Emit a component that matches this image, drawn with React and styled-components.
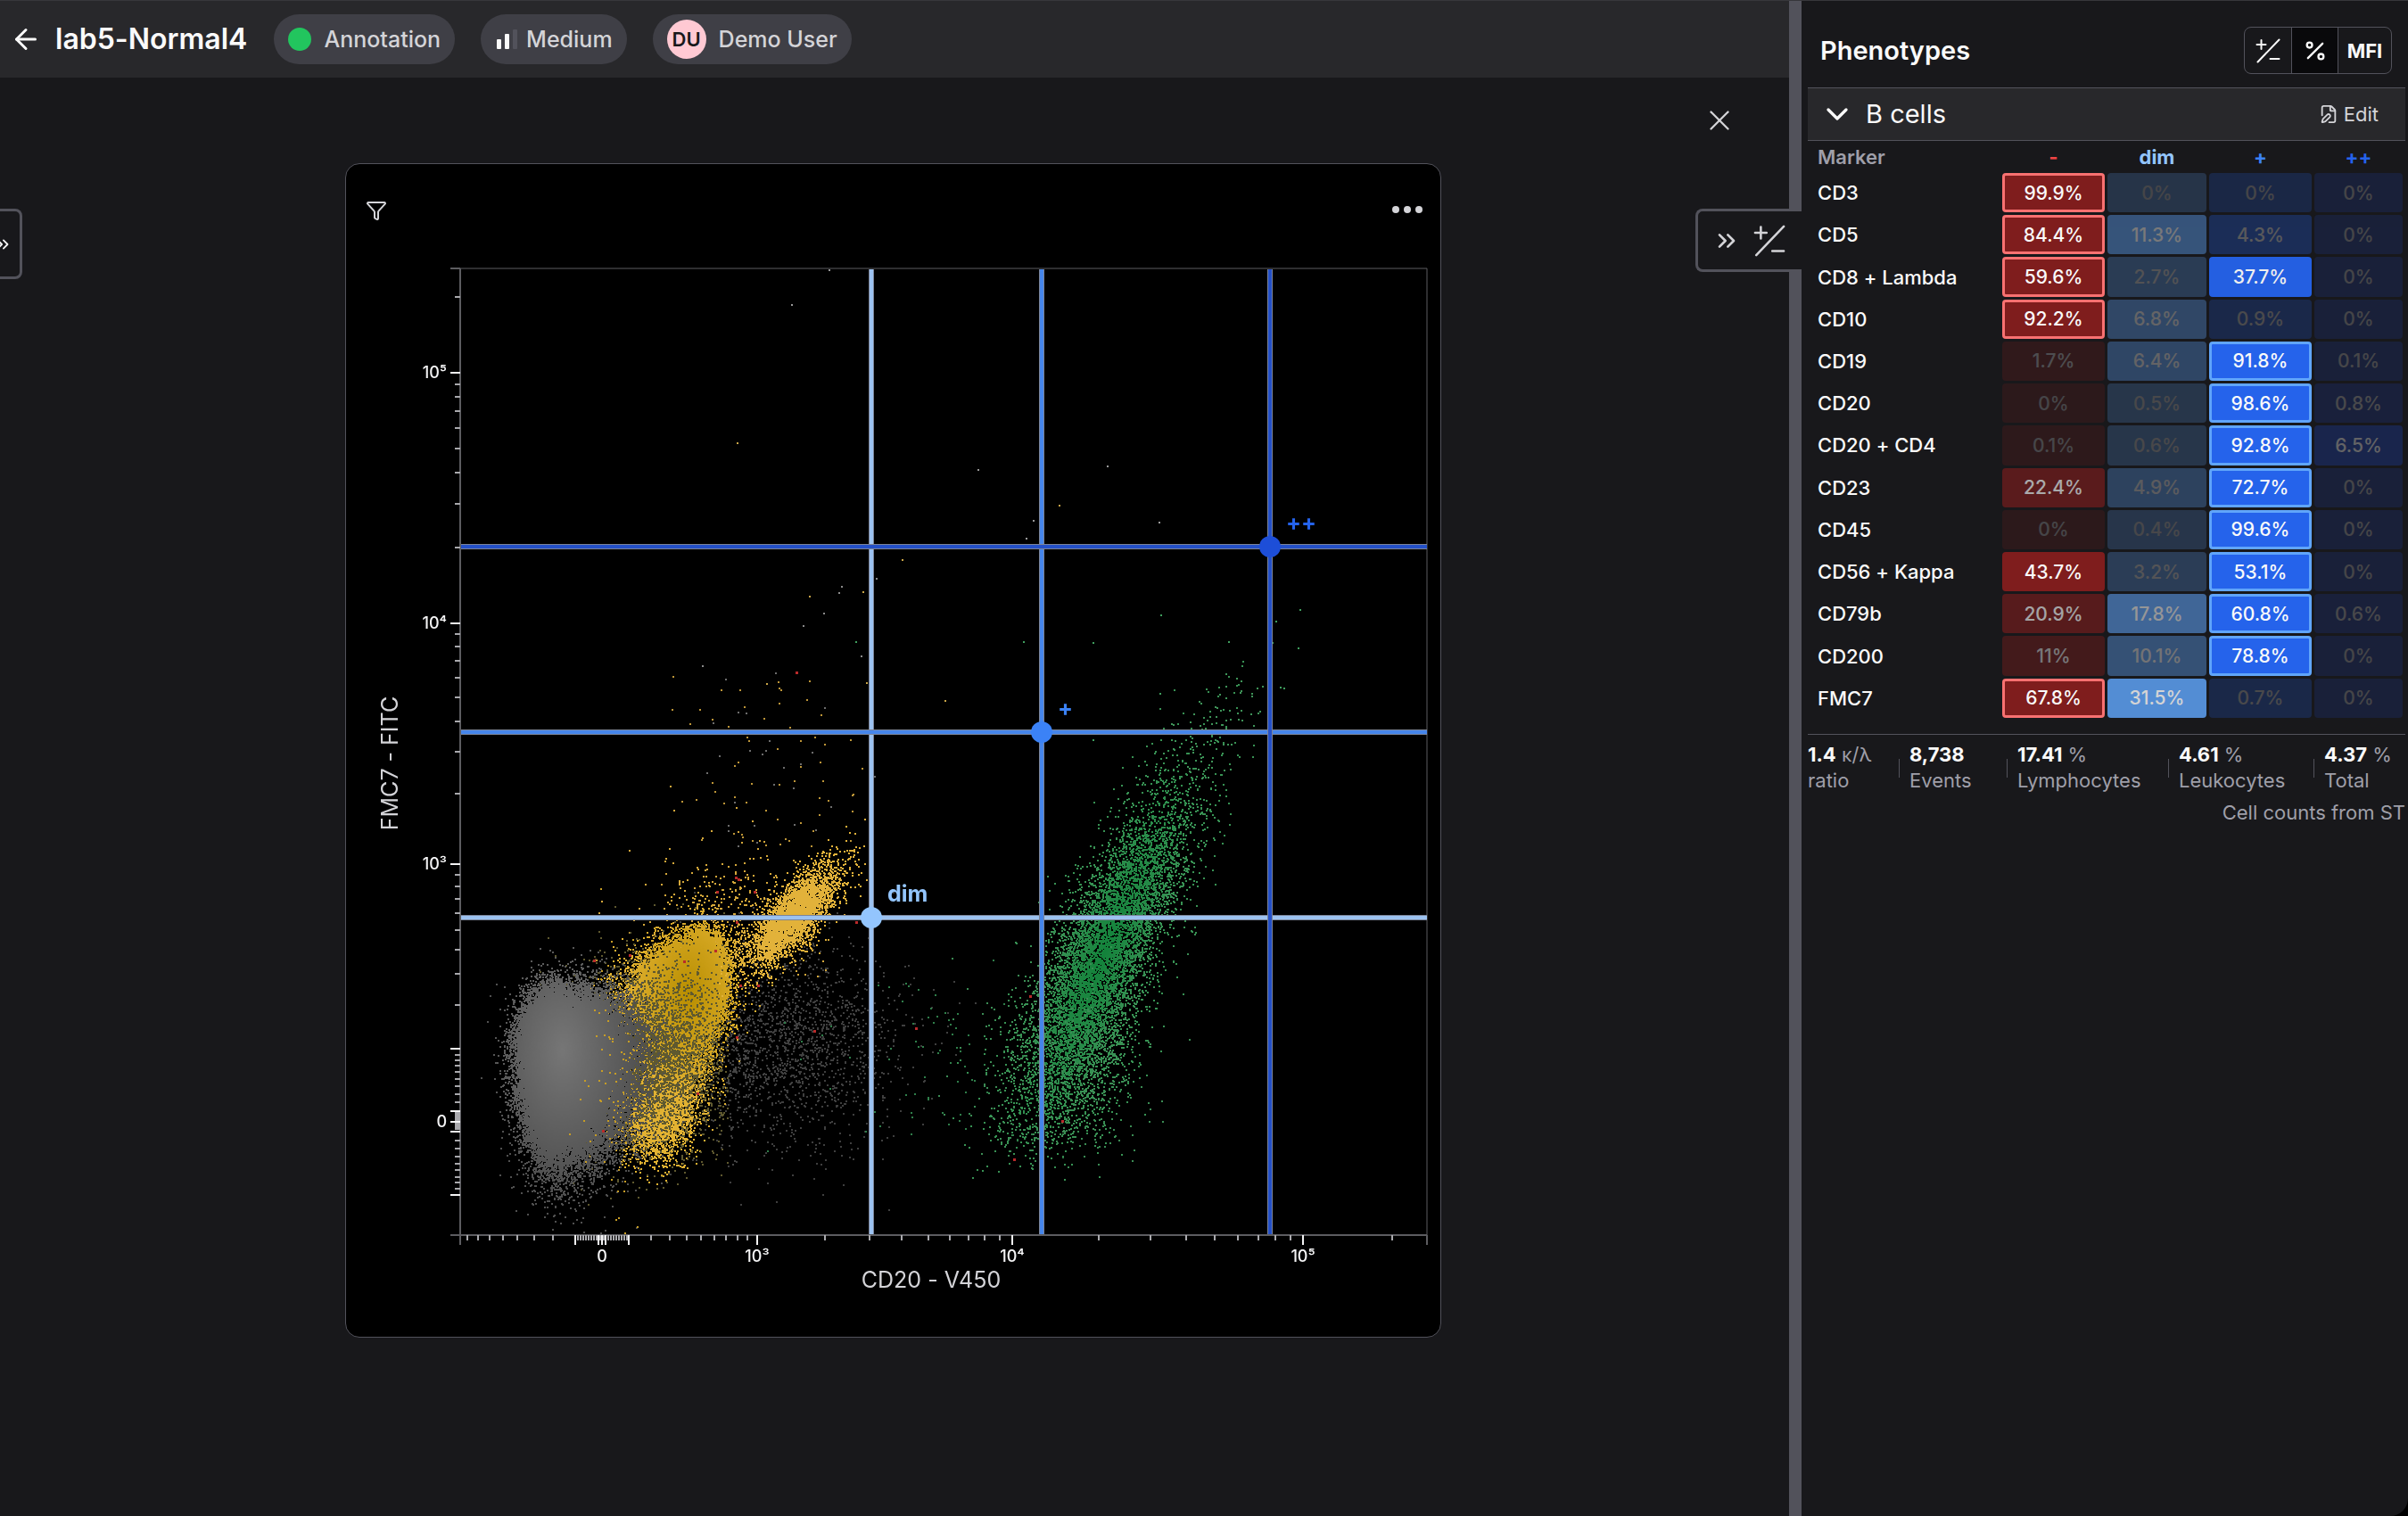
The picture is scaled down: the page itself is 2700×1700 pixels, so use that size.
import React, { useEffect, useRef } from "react"
import styled, { createGlobalStyle } from "styled-components"
import {
  ArrowLeft,
  ChevronDown,
  ChevronsRight,
  FilePen,
  Funnel,
  Percent,
  X,
} from "lucide-react"

const colors = {
  bg: "#18181b",
  bar: "#28282b",
  chip: "#3f3f46",
  line: "#52525b",
  text: "#fafafa",
  soft: "#d4d4d8",
  muted: "#9f9fa9",
}

/* ---------- data ---------- */

const columns = [
  { label: "-", color: "#ef4444", fill: "#7f1d1d", ring: "#f87171", width: 115 },
  { label: "dim", color: "#93c5fd", fill: "#60a5fa", ring: "#bfdbfe", width: 111 },
  { label: "+", color: "#3b82f6", fill: "#2563eb", ring: "#60a5fa", width: 115 },
  { label: "++", color: "#2563eb", fill: "#1e40af", ring: "#3b82f6", width: 99 },
]

const markers = [
  ["CD3", 99.9, 0, 0, 0],
  ["CD5", 84.4, 11.3, 4.3, 0],
  ["CD8 + Lambda", 59.6, 2.7, 37.7, 0],
  ["CD10", 92.2, 6.8, 0.9, 0],
  ["CD19", 1.7, 6.4, 91.8, 0.1],
  ["CD20", 0, 0.5, 98.6, 0.8],
  ["CD20 + CD4", 0.1, 0.6, 92.8, 6.5],
  ["CD23", 22.4, 4.9, 72.7, 0],
  ["CD45", 0, 0.4, 99.6, 0],
  ["CD56 + Kappa", 43.7, 3.2, 53.1, 0],
  ["CD79b", 20.9, 17.8, 60.8, 0.6],
  ["CD200", 11, 10.1, 78.8, 0],
  ["FMC7", 67.8, 31.5, 0.7, 0],
]

const stats = [
  { value: "1.4", unit: "κ/λ", label: "ratio" },
  { value: "8,738", unit: "", label: "Events" },
  { value: "17.41", unit: "%", label: "Lymphocytes" },
  { value: "4.61", unit: "%", label: "Leukocytes" },
  { value: "4.37", unit: "%", label: "Total" },
]

/* ---------- chart geometry, in plot units ---------- */

const SIZE = 1084
const LEFT = 128
const VIEW_W = 1227
const VIEW_H = 1199

const xMajor = [
  [0, ""],
  [129, ""],
  [155, ""],
  [159, "0"],
  [163, ""],
  [189, ""],
  [333, "10³"],
  [619, "10⁴"],
  [945, "10⁵"],
  [1084, ""],
]
const xMinor = [
  8, 20, 33, 48, 64, 83, 104, 132, 135, 138, 141, 144, 147, 150, 153, 157, 161, 166, 169, 172,
  175, 178, 181, 184, 187, 214, 235, 254, 270, 285, 298, 311, 322, 409, 459, 495, 525, 549, 570,
  588, 605, 716, 774, 814, 846, 872, 895, 914, 931, 1045,
]
const yMajor = [
  [0, ""],
  [117, "10⁵"],
  [398, "10⁴"],
  [668, "10³"],
  [875, ""],
  [945, ""],
  [957, "0"],
  [968, ""],
  [1039, ""],
  [1084, ""],
]
const yMinor = [
  32, 130, 144, 160, 179, 202, 229, 264, 313, 410, 424, 440, 459, 481, 508, 542, 589, 680, 693,
  707, 723, 742, 764, 791, 826, 882, 888, 894, 901, 909, 917, 926, 935, 947, 949, 951, 953, 955,
  959, 961, 963, 965, 978, 987, 996, 1004, 1011, 1019, 1025, 1032,
]

const gates = [
  { x: 461, y: 728, label: "dim", color: "#93c5fd", line: "#9cc2f0", text: "#93c5fd" },
  { x: 652, y: 520, label: "+", color: "#3b82f6", line: "#4585ea", text: "#3b82f6" },
  { x: 908, y: 312, label: "++", color: "#1d4ed8", line: "#2450c8", text: "#2563eb" },
]

/* single events that stand apart from the populations */
const strays = [
  ["#9a9a9a", [371, 40], [413, 1], [580, 225], [725, 221], [783, 284], [642, 282], [634, 302]],
  ["#c9a547", [495, 326], [391, 367], [451, 362], [455, 464], [343, 465], [543, 484], [310, 195], [671, 265]],
  ["#8b8b8b", [466, 347], [427, 356], [424, 363], [407, 386], [384, 400], [449, 434], [271, 445], [458, 442]],
  ["#3f9f5e", [785, 388], [631, 418], [709, 419], [941, 382], [914, 395], [910, 419], [861, 418], [939, 425], [784, 476], [709, 528], [443, 418], [919, 469], [923, 470]],
]
const reds = [
  [377, 453], [309, 683], [312, 685], [288, 699], [330, 699], [310, 733], [444, 733],
  [511, 852], [397, 855], [639, 816], [675, 956], [621, 999], [266, 925], [251, 777],
  [286, 765], [334, 804], [314, 804], [310, 862], [160, 967], [190, 770], [150, 776],
]

function makeRandom(seed) {
  let s = seed
  const next = () => {
    s = (s + 0x6d2b79f5) | 0
    let t = Math.imul(s ^ (s >>> 15), 1 | s)
    t = (t + Math.imul(t ^ (t >>> 7), 61 | t)) ^ t
    return ((t ^ (t >>> 14)) >>> 0) / 4294967296
  }
  const normal = () =>
    Math.sqrt(-2 * Math.log(next() + 1e-9)) * Math.cos(2 * Math.PI * next())
  return { next, normal }
}

const blend = (a, b, t) => {
  const k = Math.max(0, Math.min(1, t))
  return `rgb(${a.map((v, i) => Math.round(v + (b[i] - v) * k)).join(",")})`
}

const yellowTone = (x, y) =>
  blend([184, 142, 0], [226, 178, 50], Math.hypot((x - 255) / 72, (y - 812) / 115))

const grayTone = (x, y) =>
  blend([118, 118, 118], [80, 80, 80], Math.hypot((x - 114) / 90, (y - 875) / 150))

const greenTone = (x, y) => {
  const axis = 716 + (779 - y) * 0.4
  return blend([18, 130, 58], [56, 146, 84], Math.hypot((x - axis) / 52, (y - 770) / 230))
}

function drawEvents(ctx) {
  const { next, normal } = makeRandom(7)
  const dot = (x, y, color) => {
    ctx.fillStyle = color
    ctx.fillRect(Math.round(x), Math.round(y), 2, 2)
  }
  ctx.clearRect(0, 0, SIZE, SIZE)

  // faint events between the two main groups
  for (let i = 0; i < 1800; i++) {
    dot(368 + normal() * 62, 872 + normal() * 54, "#3f3f3f")
  }

  // wide yellow halo and the stream that rises above it
  for (let i = 0; i < 560; i++) {
    const x = 302 + normal() * 48
    const y = 748 - Math.abs(normal()) * 52 + next() * 50
    dot(x, y, "#d5a83a")
  }
  for (let i = 0; i < 90; i++) {
    dot(350 + normal() * 55, 650 - next() ** 1.3 * 200, next() < 0.7 ? "#bd9537" : "#6d6d6d")
  }

  // yellow: upper body
  for (let i = 0; i < 30000; i++) {
    const u = normal()
    const x = u > 0 ? 262 + u * 14 : 262 + u * 32
    const y = 801 - (x - 256) * 0.22 + normal() * 22
    dot(x, y, yellowTone(x, y))
  }
  // yellow: tail that runs down to the left
  for (let i = 0; i < 17000; i++) {
    const t = next() ** 1.5
    const x = 256 - t * 44 + normal() * (22 - t * 2)
    const y = 805 + t * 165 + normal() * 22
    dot(x, y, yellowTone(x, y))
  }
  // yellow: small group on the upper right
  for (let i = 0; i < 3600; i++) {
    const u = normal() * 33
    const v = normal() * 13
    const x = 372 + u * 0.72 + v * 0.7
    const y = 726 - u * 0.8 + v * 0.75
    dot(x, y, "#e2b23a")
  }

  // gray events mixed in with the yellow body
  for (let i = 0; i < 4200; i++) {
    const x = 215 + normal() * 42
    const y = 882 + normal() * 50
    dot(x, y, x > 300 ? "#444444" : "#5f592f")
  }

  // gray body
  for (let i = 0; i < 85000; i++) {
    const u = normal()
    const v = normal()
    const x = u > 0 ? 114 + u * 33 : 114 + u * 20
    const y = v > 0 ? 884 + v * 49 : 884 + v * 31
    dot(x, y, grayTone(x, y))
  }
  for (let i = 0; i < 110; i++) {
    dot(178 + normal() * 18, 900 + normal() * 80, "#c79d25")
  }

  // green
  for (let i = 0; i < 8300; i++) {
    const n = normal()
    const y = 778 + n * (n < 0 ? 92 : 98)
    const low = Math.max(0, y - 820)
    const axis = 716 + (779 - y) * (y < 779 ? 0.43 : 0.3)
    const x = axis + normal() * (29 + low * 0.05)
    if (y < 960 + next() * 70) dot(x, y, greenTone(x, y))
  }
  for (let i = 0; i < 650; i++) {
    const x = 672 + normal() * 42
    const y = 895 + normal() * 62
    if (y < 970 + next() * 60) dot(x, y, "#3b8c54")
  }
  for (let i = 0; i < 90; i++) {
    const t = next()
    dot(810 + t * 70 + normal() * 18, 560 - t * 80 + normal() * 20, "#3f9459")
  }
  for (let i = 0; i < 80; i++) {
    dot(540 + normal() * 60, 880 + normal() * 50, "#2f7f4a")
  }

  strays.forEach(([color, ...points]) => points.forEach(([x, y]) => dot(x, y, color)))
  reds.forEach(([x, y]) => {
    ctx.fillStyle = "#b92a2a"
    ctx.fillRect(x - 1, y - 1, 3, 3)
  })
}

/* ---------- small drawings ---------- */

const PlusMinusIcon = ({ size = 28 }) => (
  <svg
    width={size}
    height={size}
    viewBox='0 0 28 28'
    fill='none'
    stroke='currentColor'
    strokeWidth='2'
    strokeLinecap='round'
    aria-hidden='true'
  >
    <path d='M1.5 7h10M6.5 2v10M2.500 26.500L26.500 1.500M16.500 23H26.500' />
  </svg>
)

const LevelIcon = () => (
  <svg width='26' height='24' viewBox='0 0 26 24' aria-hidden='true'>
    <rect x='2' y='12' width='5' height='11' rx='1' fill='#fafafa' />
    <rect x='11' y='6' width='5' height='17' rx='1' fill='#fafafa' />
    <rect x='20' y='1' width='5' height='22' rx='1' fill='#52525b' />
  </svg>
)

const DotsIcon = () => (
  <svg width='36' height='22' viewBox='0 0 36 22' fill='currentColor' aria-hidden='true'>
    <circle cx='5' cy='11' r='4' />
    <circle cx='18' cy='11' r='4' />
    <circle cx='31' cy='11' r='4' />
  </svg>
)

const ScatterPlot = () => {
  const canvasRef = useRef(null)

  useEffect(() => {
    drawEvents(canvasRef.current.getContext("2d"))
  }, [])

  return (
    <PlotStyled>
      <CanvasStyled ref={canvasRef} width={SIZE} height={SIZE} />
      <ChartStyled
        viewBox={`${-LEFT} -1 ${VIEW_W} ${VIEW_H}`}
        role='img'
        aria-label='CD20 - V450 against FMC7 - FITC'
      >
        <path d={`M0 0H${SIZE}V${SIZE}`} fill='none' stroke='#5c5c60' />
        <path d={`M0 0V${SIZE}H${SIZE}`} fill='none' stroke='#5c5c60' strokeWidth='2' />
        {xMinor.map((x) => (
          <path key={x} d={`M${x} ${SIZE}v6`} stroke='#a9a9ad' strokeWidth='2' />
        ))}
        {yMinor.map((y) => (
          <path key={y} d={`M0 ${y}h-6`} stroke='#a9a9ad' strokeWidth='2' />
        ))}
        {xMajor.map(([x, label]) => (
          <g key={x}>
            <path
              d={`M${x} ${SIZE}v11`}
              stroke={x === 0 || x === SIZE ? "#5c5c60" : "#f4f4f5"}
              strokeWidth='2'
            />
            {label && (
              <TickText x={x} y={SIZE + 30} textAnchor='middle'>
                {label}
              </TickText>
            )}
          </g>
        ))}
        {yMajor.map(([y, label]) => (
          <g key={y}>
            <path
              d={`M0 ${y}h-11`}
              stroke={y === 0 || y === SIZE ? "#5c5c60" : "#f4f4f5"}
              strokeWidth='2'
            />
            {label && (
              <TickText x={-15} y={y + 6} textAnchor='end'>
                {label}
              </TickText>
            )}
          </g>
        ))}
        {gates.map((g) => (
          <g key={g.label}>
            <path d={`M1 ${g.y}H${SIZE}M${g.x} 1V${SIZE - 1}`} stroke='#7b8498' strokeWidth='6' />
            <path d={`M1 ${g.y}H${SIZE}M${g.x} 1V${SIZE - 1}`} stroke={g.line} strokeWidth='4' />
          </g>
        ))}
        {gates.map((g) => (
          <g key={g.label}>
            <circle cx={g.x} cy={g.y} r='12' fill={g.color} />
            <GateText x={g.x + 18} y={g.y - 18} fill={g.text}>
              {g.label}
            </GateText>
          </g>
        ))}
        <AxisText x={528} y={1143} textAnchor='middle'>
          CD20 - V450
        </AxisText>
        <AxisText x={-555} y={-70} textAnchor='middle' transform='rotate(-90)'>
          FMC7 - FITC
        </AxisText>
      </ChartStyled>
    </PlotStyled>
  )
}

const MarkerTable = () => (
  <TableStyled>
    <colgroup>
      <col />
      {columns.map((c) => (
        <ColStyled key={c.label} $width={c.width} />
      ))}
    </colgroup>
    <thead>
      <HeadRow>
        <MarkerHead scope='col'>Marker</MarkerHead>
        {columns.map((c) => (
          <LevelHead key={c.label} scope='col' $color={c.color}>
            {c.label}
          </LevelHead>
        ))}
      </HeadRow>
    </thead>
    <tbody>
      {markers.map(([name, ...values]) => (
        <tr key={name}>
          <NameCell scope='row'>{name}</NameCell>
          {values.map((value, i) => (
            <ValueCell
              key={columns[i].label}
              $fill={columns[i].fill}
              $ring={value >= 50 ? columns[i].ring : columns[i].fill}
              style={{ opacity: 0.2 + 0.8 * Math.min(1, value / 40) }}
            >
              {value}%
            </ValueCell>
          ))}
        </tr>
      ))}
    </tbody>
  </TableStyled>
)

const App = () => {
  return (
    <>
      <GlobalStyle />
      <PageStyled>
        <MainStyled>
          <HeaderStyled>
            <BackButton aria-label='Back'>
              <ArrowLeft size={36} strokeWidth={2} />
            </BackButton>
            <TitleStyled>lab5-Normal4</TitleStyled>
            <ChipStyled>
              <StatusDot />
              Annotation
            </ChipStyled>
            <ChipStyled $tight>
              <LevelIcon />
              Medium
            </ChipStyled>
            <ChipStyled>
              <AvatarStyled>DU</AvatarStyled>
              Demo User
            </ChipStyled>
          </HeaderStyled>

          <LeftTab aria-label='Open left panel'>
            <ChevronsRight size={22} strokeWidth={2} />
          </LeftTab>
          <RightTab aria-label='Collapse phenotypes panel'>
            <ChevronsRight size={32} strokeWidth={2} />
            <PlusMinusIcon size={36} />
          </RightTab>

          <StageBar>
            <IconButton aria-label='Close'>
              <X size={38} strokeWidth={1.5} />
            </IconButton>
          </StageBar>

          <StageStyled>
            <CardStyled>
              <CardBar>
                <IconButton aria-label='Filter'>
                  <Funnel size={24} strokeWidth={2} />
                </IconButton>
                <IconButton aria-label='More'>
                  <DotsIcon />
                </IconButton>
              </CardBar>
              <ScatterPlot />
            </CardStyled>
          </StageStyled>
        </MainStyled>

        <ResizerStyled />

        <PanelStyled>
          <PanelHead>
            <PanelTitle>Phenotypes</PanelTitle>
            <ToggleGroup role='group' aria-label='Value type'>
              <ToggleButton aria-label='Plus minus'>
                <PlusMinusIcon size={28} />
              </ToggleButton>
              <ToggleButton aria-label='Percent' aria-pressed='true' $active>
                <Percent size={28} strokeWidth={2} />
              </ToggleButton>
              <ToggleButton $wide>MFI</ToggleButton>
            </ToggleGroup>
          </PanelHead>

          <SectionHead>
            <SectionToggle aria-expanded='true'>
              <ChevronDown size={40} strokeWidth={2} />
              B cells
            </SectionToggle>
            <EditButton>
              <FilePen size={22} strokeWidth={2} />
              Edit
            </EditButton>
          </SectionHead>

          <MarkerTable />

          <StatsStyled>
            {stats.map((s) => (
              <StatItem key={s.label}>
                <div>
                  <StatValue>{s.value}</StatValue> {s.unit}
                </div>
                <div>{s.label}</div>
              </StatItem>
            ))}
          </StatsStyled>
          <SourceNote>Cell counts from ST</SourceNote>
        </PanelStyled>
      </PageStyled>
    </>
  )
}

export default App

/* ---------- styles ---------- */

const GlobalStyle = createGlobalStyle`
  *, *::before, *::after {
    box-sizing: border-box;
  }

  body {
    margin: 0;
    background: #000;
    color: ${colors.text};
    font-family: Inter, "Liberation Sans", sans-serif;
    font-feature-settings: "calt" 0;
  }

  button {
    padding: 0;
    border: 0;
    background: none;
    color: inherit;
    font: inherit;
    cursor: pointer;
  }

  svg {
    display: block;
    flex: none;
  }
`

const PageStyled = styled.div`
  display: flex;
  min-height: 100vh;
  border-top: 1px solid #37373b;
  border-bottom-right-radius: 20px;
  background: ${colors.bg};
  overflow: hidden;
`

const MainStyled = styled.main`
  position: relative;
  flex: 1;
  min-width: 0;
  display: flex;
  flex-direction: column;
`

const HeaderStyled = styled.header`
  display: flex;
  align-items: center;
  height: 86px;
  padding-left: 11px;
  background: ${colors.bar};
`

const BackButton = styled.button`
  margin-right: 15px;
`

const TitleStyled = styled.h1`
  margin: 0 30px 0 0;
  font-size: 32px;
  font-weight: 600;
  line-height: 40px;
`

const ChipStyled = styled.div`
  display: flex;
  align-items: center;
  gap: ${(p) => (p.$tight ? 9 : 14)}px;
  height: 56px;
  margin-right: 29px;
  padding: 0 16px;
  border-radius: 28px;
  background: ${colors.chip};
  color: ${colors.soft};
  font-size: 25px;
  font-weight: 500;
  line-height: 32px;
`

const StatusDot = styled.span`
  width: 26px;
  height: 26px;
  border-radius: 50%;
  background: #22c55e;
`

const AvatarStyled = styled.span`
  display: grid;
  place-items: center;
  width: 44px;
  height: 44px;
  border-radius: 50%;
  background: #ffc9d3;
  color: ${colors.bg};
  font-size: 22px;
  font-weight: 600;
`

const EdgeTab = styled.button`
  position: absolute;
  top: 233px;
  display: flex;
  align-items: center;
  border: 3px solid ${colors.line};
  background: ${colors.bg};
  color: ${colors.soft};
`

const LeftTab = styled(EdgeTab)`
  left: 0;
  width: 25px;
  height: 79px;
  justify-content: flex-end;
  padding-right: 8px;
  border-left: 0;
  border-radius: 0 8px 8px 0;
  color: ${colors.text};
`

const RightTab = styled(EdgeTab)`
  right: -14px;
  z-index: 1;
  width: 119px;
  height: 71px;
  gap: 14px;
  padding-left: 16px;
  border-right: 0;
  border-radius: 8px 0 0 8px;
`

const StageBar = styled.div`
  display: flex;
  justify-content: flex-end;
  padding: 29px 59px 0;
`

const IconButton = styled.button`
  display: grid;
  place-items: center;
  color: ${colors.soft};
`

const StageStyled = styled.section`
  display: flex;
  justify-content: center;
  padding: 29px 44px 29px 40px;
`

const CardStyled = styled.div`
  width: 100%;
  max-width: 1229px;
  border: 1px solid ${colors.line};
  border-radius: 16px;
  background: #000;
  overflow: hidden;
`

const CardBar = styled.div`
  display: flex;
  align-items: flex-start;
  justify-content: space-between;
  height: 116px;
  padding: 40px 19px 0 22px;
`

const PlotStyled = styled.div`
  position: relative;
`

/* sits under the axes, on the same grid as the chart's view box */
const CanvasStyled = styled.canvas`
  position: absolute;
  top: 1px;
  left: ${(LEFT / VIEW_W) * 100}%;
  width: ${(SIZE / VIEW_W) * 100}%;
`

const ChartStyled = styled.svg`
  position: relative;
  width: 100%;
`

const TickText = styled.text`
  fill: #f4f4f5;
  font-size: 18px;
  font-weight: 500;
`

const AxisText = styled.text`
  fill: ${colors.soft};
  font-size: 25px;
`

const GateText = styled.text`
  font-size: 25px;
  font-weight: 700;
`

const ResizerStyled = styled.div`
  flex: none;
  width: 14px;
  background: ${colors.line};
`

const PanelStyled = styled.aside`
  flex: none;
  width: 680px;
  padding: 0 3px 0 7px;
`

const PanelHead = styled.div`
  display: flex;
  align-items: center;
  justify-content: space-between;
  height: 97px;
  padding: 14px 15px 0 14px;
`

const PanelTitle = styled.h2`
  margin: 0;
  font-size: 29px;
  font-weight: 600;
  line-height: 40px;
`

const ToggleGroup = styled.div`
  display: flex;
  height: 53px;
  border: 1px solid ${colors.line};
  border-radius: 8px;
  overflow: hidden;
`

const ToggleButton = styled.button`
  display: grid;
  place-items: center;
  width: ${(p) => (p.$wide ? 60 : 52)}px;
  background: ${(p) => (p.$active ? "#09090b" : "transparent")};
  font-size: 22px;
  font-weight: 700;

  & + & {
    border-left: 1px solid ${colors.line};
  }
`

const SectionHead = styled.div`
  display: flex;
  align-items: center;
  justify-content: space-between;
  height: 60px;
  padding: 0 30px 0 13px;
  border: solid ${colors.line};
  border-width: 1px 0;
  background: ${colors.bar};
`

const SectionToggle = styled.button`
  display: flex;
  align-items: center;
  gap: 12px;
  font-size: 29px;
  line-height: 36px;
`

const EditButton = styled.button`
  display: flex;
  align-items: center;
  gap: 6px;
  color: ${colors.soft};
  font-size: 22px;
  line-height: 28px;
`

const TableStyled = styled.table`
  width: 100%;
  height: 650px;
  table-layout: fixed;
  border-collapse: separate;
  border-spacing: 3px;
  font-size: 22px;
  line-height: 28px;
`

const ColStyled = styled.col`
  width: ${(p) => p.$width}px;
`

const HeadRow = styled.tr`
  height: 30px;
`

const MarkerHead = styled.th`
  padding: 0 0 0 8px;
  color: ${colors.muted};
  font-weight: 600;
  text-align: left;
`

const LevelHead = styled.th`
  padding: 0;
  color: ${(p) => p.$color};
  font-weight: 700;
`

const NameCell = styled.th`
  padding: 0 0 0 8px;
  font-weight: 500;
  text-align: left;
`

const ValueCell = styled.td`
  padding: 1px 0 0;
  border: 3px solid ${(p) => p.$ring};
  border-radius: 4px;
  background: ${(p) => p.$fill};
  font-size: 21px;
  font-weight: 500;
  text-align: center;
`

const StatsStyled = styled.div`
  display: grid;
  grid-template-columns: 102fr 121fr 181fr 163fr 103fr;
  margin-top: 15px;
  padding-top: 8px;
  border-top: 1px solid ${colors.line};
  color: ${colors.muted};
  font-size: 22px;
  line-height: 29px;
`

const StatItem = styled.div`
  position: relative;
  white-space: nowrap;

  & + & {
    padding-left: 12px;
  }

  & + &::before {
    content: "";
    position: absolute;
    top: 19px;
    left: 0;
    width: 1px;
    height: 21px;
    background: ${colors.line};
  }
`

const StatValue = styled.strong`
  color: ${colors.text};
  font-weight: 700;
`

const SourceNote = styled.p`
  margin: 7px 0 0;
  color: ${colors.muted};
  font-size: 22px;
  line-height: 29px;
  text-align: right;
`
